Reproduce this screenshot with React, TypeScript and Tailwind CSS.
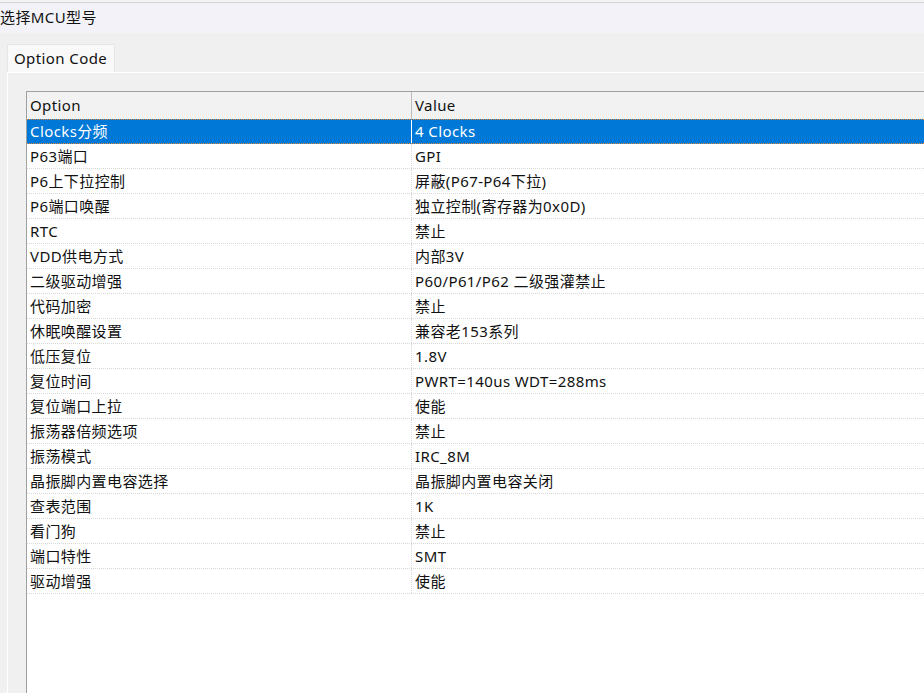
import React from "react";

type Row = { option: string; value: string };

const rows: Row[] = [
  { option: "Clocks分频", value: "4 Clocks" },
  { option: "P63端口", value: "GPI" },
  { option: "P6上下拉控制", value: "屏蔽(P67-P64下拉)" },
  { option: "P6端口唤醒", value: "独立控制(寄存器为0x0D)" },
  { option: "RTC", value: "禁止" },
  { option: "VDD供电方式", value: "内部3V" },
  { option: "二级驱动增强", value: "P60/P61/P62 二级强灌禁止" },
  { option: "代码加密", value: "禁止" },
  { option: "休眠唤醒设置", value: "兼容老153系列" },
  { option: "低压复位", value: "1.8V" },
  { option: "复位时间", value: "PWRT=140us WDT=288ms" },
  { option: "复位端口上拉", value: "使能" },
  { option: "振荡器倍频选项", value: "禁止" },
  { option: "振荡模式", value: "IRC_8M" },
  { option: "晶振脚内置电容选择", value: "晶振脚内置电容关闭" },
  { option: "查表范围", value: "1K" },
  { option: "看门狗", value: "禁止" },
  { option: "端口特性", value: "SMT" },
  { option: "驱动增强", value: "使能" },
];

const FONT = "font-['Noto_Sans','Noto_Sans_CJK_SC',sans-serif]";

const App = () => {
  const [selected, setSelected] = React.useState<number>(0);

  return (
    <div className={`w-[924px] h-[693px] overflow-hidden bg-[#f0f0f0] flex flex-col text-[15px] tracking-[0.4px] text-[#111] ${FONT}`}>
      {/* window title */}
      <div className="h-[2px] bg-[#f4f4f4]" />
      <div className="h-[31px] border-t border-[#d4d4d4] bg-[#f3f2f8] flex items-center leading-none pb-[2px]">
        选择MCU型号
      </div>

      {/* tabs */}
      <div className="pt-[11px] pl-[7px] flex">
        <div className="w-[108px] h-[28px] bg-[#f9f9f9] border-t border-l border-r border-[#e6e6e6] pl-[6px] flex items-center leading-none">
          Option Code
        </div>
      </div>

      {/* tab pane */}
      <div className="flex-1 flex flex-col ml-[7px] border-t border-l border-white pl-[18px] pt-[18px] bg-[#f0f0f0]">
        <div className="flex-1 bg-white border-t border-l border-[#a0a0a0] flex flex-col">
          <div className="h-[27px] flex bg-[#f2f2f2] leading-none">
            <div className="w-[385px] flex items-center pl-[3px] border-r border-[#bcbcbc]">Option</div>
            <div className="flex-1 flex items-center pl-[3px]">Value</div>
          </div>
          {rows.map((r, i) => {
            const sel = i === selected;
            return (
              <div
                key={i}
                onClick={() => setSelected(i)}
                className={cn(
                  "h-[25px] flex leading-none",
                  sel
                    ? "bg-[#0078d7] text-white border-y border-dotted border-[#e08a3c]"
                    : "border-b border-dotted border-[#d8d8d8]"
                )}
              >
                <div
                  className={cn(
                    "w-[385px] flex items-center pl-[3px] border-r",
                    sel ? "border-solid border-white" : "border-dotted border-[#d8d8d8]"
                  )}
                >
                  {r.option}
                </div>
                <div className="flex-1 flex items-center pl-[3px]">{r.value}</div>
              </div>
            );
          })}
        </div>
      </div>
    </div>
  );
};

function cn(...c: string[]) {
  return c.filter(Boolean).join(" ");
}

export default App;
